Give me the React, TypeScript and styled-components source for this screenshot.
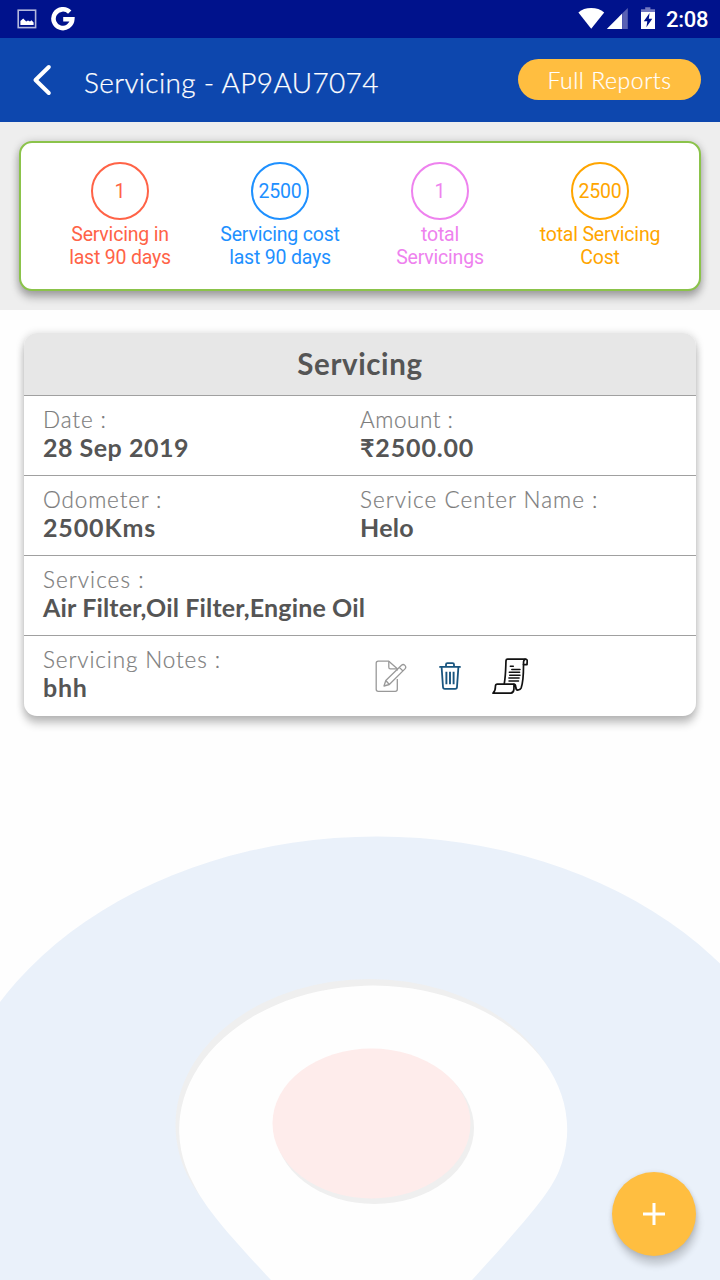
import React from "react";
import styled, { createGlobalStyle } from "styled-components";

const GlobalStyle = createGlobalStyle`
  * { box-sizing: border-box; }
  body { margin: 0; background: #fff; }
`;

const Screen = styled.div`
  position: relative;
  width: 720px;
  height: 1280px;
  overflow: hidden;
  display: flex;
  flex-direction: column;
  background: #fefefe;
  font-family: Lato, "Noto Sans", sans-serif;
`;

const Watermark = styled.svg`
  position: absolute;
  left: 0;
  bottom: 0;
`;

const StatusBar = styled.div`
  flex: none;
  height: 38px;
  display: flex;
  align-items: center;
  justify-content: space-between;
  padding: 0 12px 0 17px;
  background: #00128c;
`;

const StatusGroup = styled.div<{ $gap: number }>`
  display: flex;
  align-items: center;
  gap: ${(p) => p.$gap}px;
  height: 38px;
`;

const Clock = styled.span`
  width: 42px;
  padding-top: 2px;
  font: 500 22px/38px Roboto, sans-serif;
  letter-spacing: -0.3px;
  white-space: nowrap;
  color: #fff;
`;

const Header = styled.header`
  flex: none;
  height: 84px;
  display: flex;
  align-items: center;
  padding: 0 19px 0 32px;
  background: #0d47ae;
`;

const BackIcon = styled.svg`
  flex: none;
`;

const Title = styled.h1`
  flex: 1;
  margin: 4px 0 0 32px;
  font-size: 28px;
  font-weight: 300;
  line-height: 34px;
  letter-spacing: 0.35px;
  white-space: nowrap;
  color: #fff;
  -webkit-text-stroke: 0.25px #fff;
`;

const ReportsButton = styled.button`
  width: 183px;
  height: 41px;
  margin-top: -1px;
  padding: 1px 0 0;
  border: 0;
  border-radius: 21px;
  background: #ffbe40;
  color: #fff;
  font: 300 23px/41px Lato, sans-serif;
  letter-spacing: 0.55px;
  -webkit-text-stroke: 0.2px #fff;
`;

const Summary = styled.section`
  flex: none;
  height: 188px;
  padding: 19px;
  background: #eee;
`;

const SummaryCard = styled.div`
  height: 150px;
  display: grid;
  grid-template-columns: repeat(4, 160px);
  justify-content: center;
  padding-top: 19px;
  border: 2px solid #8bc34a;
  border-radius: 13px;
  background: #fff;
  box-shadow: 0 7px 8px rgba(0, 0, 0, 0.24), 0 1px 8px rgba(0, 0, 0, 0.2);
`;

const StatItem = styled.div<{ $color: string }>`
  display: flex;
  flex-direction: column;
  align-items: center;
  color: ${(p) => p.$color};
  font: 400 19.5px/23px Roboto, sans-serif;
  letter-spacing: -0.2px;
  text-align: center;
`;

const StatValue = styled.div`
  width: 58px;
  height: 58px;
  margin-bottom: 3px;
  border: 2px solid currentColor;
  border-radius: 50%;
  line-height: 55px;
`;

const StatLine = styled.span`
  white-space: nowrap;
`;

const RecordCard = styled.article`
  position: relative;
  flex: none;
  height: 383px;
  margin: 23px 24px 0;
  border-radius: 13px;
  background: #fff;
  box-shadow: 0 8px 8px rgba(0, 0, 0, 0.2), 0 1px 8px rgba(0, 0, 0, 0.18);
`;

const RecordHeading = styled.h2`
  height: 62px;
  margin: 0;
  border-radius: 13px 13px 0 0;
  font-size: 29.5px;
  font-weight: 700;
  line-height: 61px;
  letter-spacing: 0.6px;
  text-align: center;
  color: #555;
  background: #e7e7e7;
`;

const Row = styled.div`
  display: grid;
  grid-template-columns: 317px 1fr;
  height: 80px;
  padding: 10px 19px 0;
  border-top: 1px solid #a0a0a0;
`;

const Field = styled.div`
  white-space: nowrap;
`;

const Label = styled.div<{ $spacing: number }>`
  font-size: 22.5px;
  font-weight: 300;
  line-height: 28px;
  letter-spacing: ${(p) => p.$spacing}px;
  color: #7c7c7c;
  -webkit-text-stroke: 0.2px #7c7c7c;
`;

const Value = styled.div<{ $spacing: number }>`
  font-size: 25px;
  font-weight: 700;
  line-height: 27px;
  letter-spacing: ${(p) => p.$spacing}px;
  color: #555;
`;

const Actions = styled.div`
  display: flex;
  align-items: flex-start;
  padding: 11px 0 0 15px;
`;

const ActionSlot = styled.span<{ $width: number; $top: number }>`
  width: ${(p) => p.$width}px;
  padding-top: ${(p) => p.$top}px;
`;

const AddButton = styled.button`
  position: absolute;
  right: 24px;
  bottom: 24px;
  width: 84px;
  height: 84px;
  padding: 0;
  display: grid;
  place-items: center;
  border: 0;
  border-radius: 50%;
  background: #ffbe40;
  box-shadow: 2px 9px 7px rgba(0, 0, 0, 0.16), 0 1px 5px rgba(0, 0, 0, 0.14);
`;

type StatData = { value: string; lines: [string, string]; color: string };

const stats: StatData[] = [
  { value: "1", lines: ["Servicing in", "last 90 days"], color: "#ff6347" },
  { value: "2500", lines: ["Servicing cost", "last 90 days"], color: "#1e90ff" },
  { value: "1", lines: ["total", "Servicings"], color: "#ee82ee" },
  { value: "2500", lines: ["total Servicing", "Cost"], color: "#ffa500" },
];

type Entry = { label: string; value: string; labelSpacing: number; valueSpacing: number };

const rows: Entry[][] = [
  [
    { label: "Date :", value: "28 Sep 2019", labelSpacing: 0.9, valueSpacing: 0.5 },
    { label: "Amount :", value: "₹2500.00", labelSpacing: 0.55, valueSpacing: 0.85 },
  ],
  [
    { label: "Odometer :", value: "2500Kms", labelSpacing: 0.85, valueSpacing: 0.85 },
    { label: "Service Center Name :", value: "Helo", labelSpacing: 1.03, valueSpacing: 0.3 },
  ],
  [
    {
      label: "Services :",
      value: "Air Filter,Oil Filter,Engine Oil",
      labelSpacing: 1.05,
      valueSpacing: 0.15,
    },
  ],
  [{ label: "Servicing Notes :", value: "bhh", labelSpacing: 0.88, valueSpacing: 0.7 }],
];

const EditIcon = () => (
  <svg width="32" height="34" viewBox="0 0 32 34" fill="none" stroke="#999" strokeWidth="1.3" strokeLinejoin="round">
    <path d="M22.3 8.8 13.8 1.2H3.2Q1.2 1.2 1.2 3.2V29.3Q1.2 31.3 3.2 31.3H20.3Q22.3 31.3 22.3 29.3V19" />
    <path d="M13.8 1.2V7.2Q13.8 8.8 15.4 8.8H22.3V10.5" />
    <path d="M9 26 10.8 20.5 26.5 5.2Q28.2 3.8 29.9 5.4 31.6 7.2 30 8.9L14.3 24.5ZM10.8 20.5 14.3 24.5M24.3 7.4 28 11" />
  </svg>
);

const TrashIcon = () => (
  <svg width="22" height="28" viewBox="0 0 22 28" fill="none" stroke="#19557f" strokeWidth="1.8" strokeLinejoin="round" strokeLinecap="round">
    <path d="M1 4.9H21M7 4.7V2.6Q7 1.2 8.4 1.2H13.6Q15 1.2 15 2.6V4.7M2.6 5 4 25Q4.1 26.8 5.8 26.8H16.2Q17.9 26.8 18 25L19.4 5" />
    <path d="M7.4 9.8V22.3M11 9.8V22.3M14.6 9.8V22.3" strokeLinecap="butt" strokeWidth="1.9" />
  </svg>
);

const ReceiptIcon = () => (
  <svg width="36" height="37" viewBox="0 0 36 37" fill="none" stroke="#111" strokeWidth="1.7" strokeLinejoin="round" strokeLinecap="round">
    <path d="M12.3 25.4C13.8 17 13.7 9 14 2.6Q14.1 1.2 15.5 1.2H33.4Q35.4 1.2 35.2 3.4L35 6.6H31.5" />
    <path d="M33.2 1.3Q31.5 1.8 31.5 5C31.6 15 31.4 23 29.2 29.8Q28.2 32.1 25.7 32.1 23.9 31.9 23.8 29.4 23.8 26.2 21.6 26.1H5.3Q3.5 26.1 3.4 28.2 3.6 33 1 35.2H18.8Q21.5 35 21.9 31.4L22 26.2" />
    <path d="M18.3 8.3H21.3M19.8 11.4H28M17.3 14.3H27.6M17.7 17.2H28M16.9 20.1H27.1M17 23H26.5" strokeWidth="1.5" />
  </svg>
);

const ImageIcon = () => (
  <svg width="20" height="20" viewBox="0 0 20 20">
    <rect x="1.2" y="1.2" width="17.4" height="17.4" fill="none" stroke="#b3b8dd" strokeWidth="1.6" />
    <path d="M3.400 16V12L6.200 9.400 9.200 12.600 11 11.600 13 12.400 14.500 11.200 16.600 13.600V16Z" fill="#fff" />
  </svg>
);

const GoogleIcon = () => (
  <svg width="24" height="24" viewBox="0 0 24 24" fill="none" stroke="#fff" strokeWidth="4.6">
    <path d="M18.7 5.2A9.4 9.4 0 1 0 21.3 12.2H12.2" />
  </svg>
);

const SystemIcons = () => (
  <svg width="78" height="24" viewBox="0 0 78 24">
    <path d="M0.4 5.4Q5.5 1 13.2 1 20.9 1 26.2 5.4L13.2 21.8Z" fill="#fff" />
    <path d="M28.8 22 44.2 6.6V22Z" fill="#fff" />
    <path d="M44.2 6.6 49.8 1V22H44.2Z" fill="#5961b4" />
    <path d="M63 5.2V2.2H67.2V0.2H72.4V2.2H77V5.2Z" fill="#7379c0" />
    <path d="M63 5H77V22H63Z" fill="#fff" />
    <path d="M71.6 6 65.8 14.2H69.3L68.4 20.2 74.3 11.8H70.8Z" fill="#00128c" />
  </svg>
);

export default function App() {
  return (
    <>
      <GlobalStyle />
      <Screen>
        <Watermark width="720" height="460" viewBox="0 820 720 460" aria-hidden="true">
          <ellipse cx="377" cy="1164.5" rx="434" ry="328" fill="#eaf1fa" />
          <ellipse cx="369.5" cy="1125" rx="194" ry="146" fill="#efefef" />
          <path
            d="M271 1280C226 1232 204 1206 193 1183A194 144 0 1 1 559 1171C549 1194 530 1216 472 1280Z"
            fill="#fefefe"
          />
          <ellipse cx="374.5" cy="1128" rx="99.5" ry="76" fill="#efefef" />
          <ellipse cx="371.5" cy="1123.5" rx="99" ry="75" fill="#feeceb" />
        </Watermark>

        <StatusBar>
          <StatusGroup $gap={14}>
            <ImageIcon />
            <GoogleIcon />
          </StatusGroup>
          <StatusGroup $gap={10}>
            <SystemIcons />
            <Clock>2:08</Clock>
          </StatusGroup>
        </StatusBar>

        <Header>
          <BackIcon width="20" height="32" viewBox="0 0 20 32" fill="none" stroke="#fff" strokeWidth="4" strokeLinecap="round" strokeLinejoin="round">
            <path d="M16.8 3 3.5 16 16.8 29" />
          </BackIcon>
          <Title>Servicing - AP9AU7074</Title>
          <ReportsButton>Full Reports</ReportsButton>
        </Header>

        <Summary>
          <SummaryCard>
            {stats.map((s, i) => (
              <StatItem key={i} $color={s.color}>
                <StatValue>{s.value}</StatValue>
                <StatLine>{s.lines[0]}</StatLine>
                <StatLine>{s.lines[1]}</StatLine>
              </StatItem>
            ))}
          </SummaryCard>
        </Summary>

        <RecordCard>
          <RecordHeading>Servicing</RecordHeading>
          {rows.map((row, i) => (
            <Row key={i}>
              {row.map((entry) => (
                <Field key={entry.label}>
                  <Label $spacing={entry.labelSpacing}>{entry.label}</Label>
                  <Value $spacing={entry.valueSpacing}>{entry.value}</Value>
                </Field>
              ))}
              {i === rows.length - 1 && (
                <Actions>
                  <ActionSlot $width={64} $top={3}>
                    <EditIcon />
                  </ActionSlot>
                  <ActionSlot $width={53} $top={5}>
                    <TrashIcon />
                  </ActionSlot>
                  <ActionSlot $width={36} $top={1}>
                    <ReceiptIcon />
                  </ActionSlot>
                </Actions>
              )}
            </Row>
          ))}
        </RecordCard>

        <AddButton aria-label="Add">
          <svg width="22" height="22" viewBox="0 0 22 22" stroke="#fff" strokeWidth="3">
            <path d="M11 0V22M0 11H22" />
          </svg>
        </AddButton>
      </Screen>
    </>
  );
}
